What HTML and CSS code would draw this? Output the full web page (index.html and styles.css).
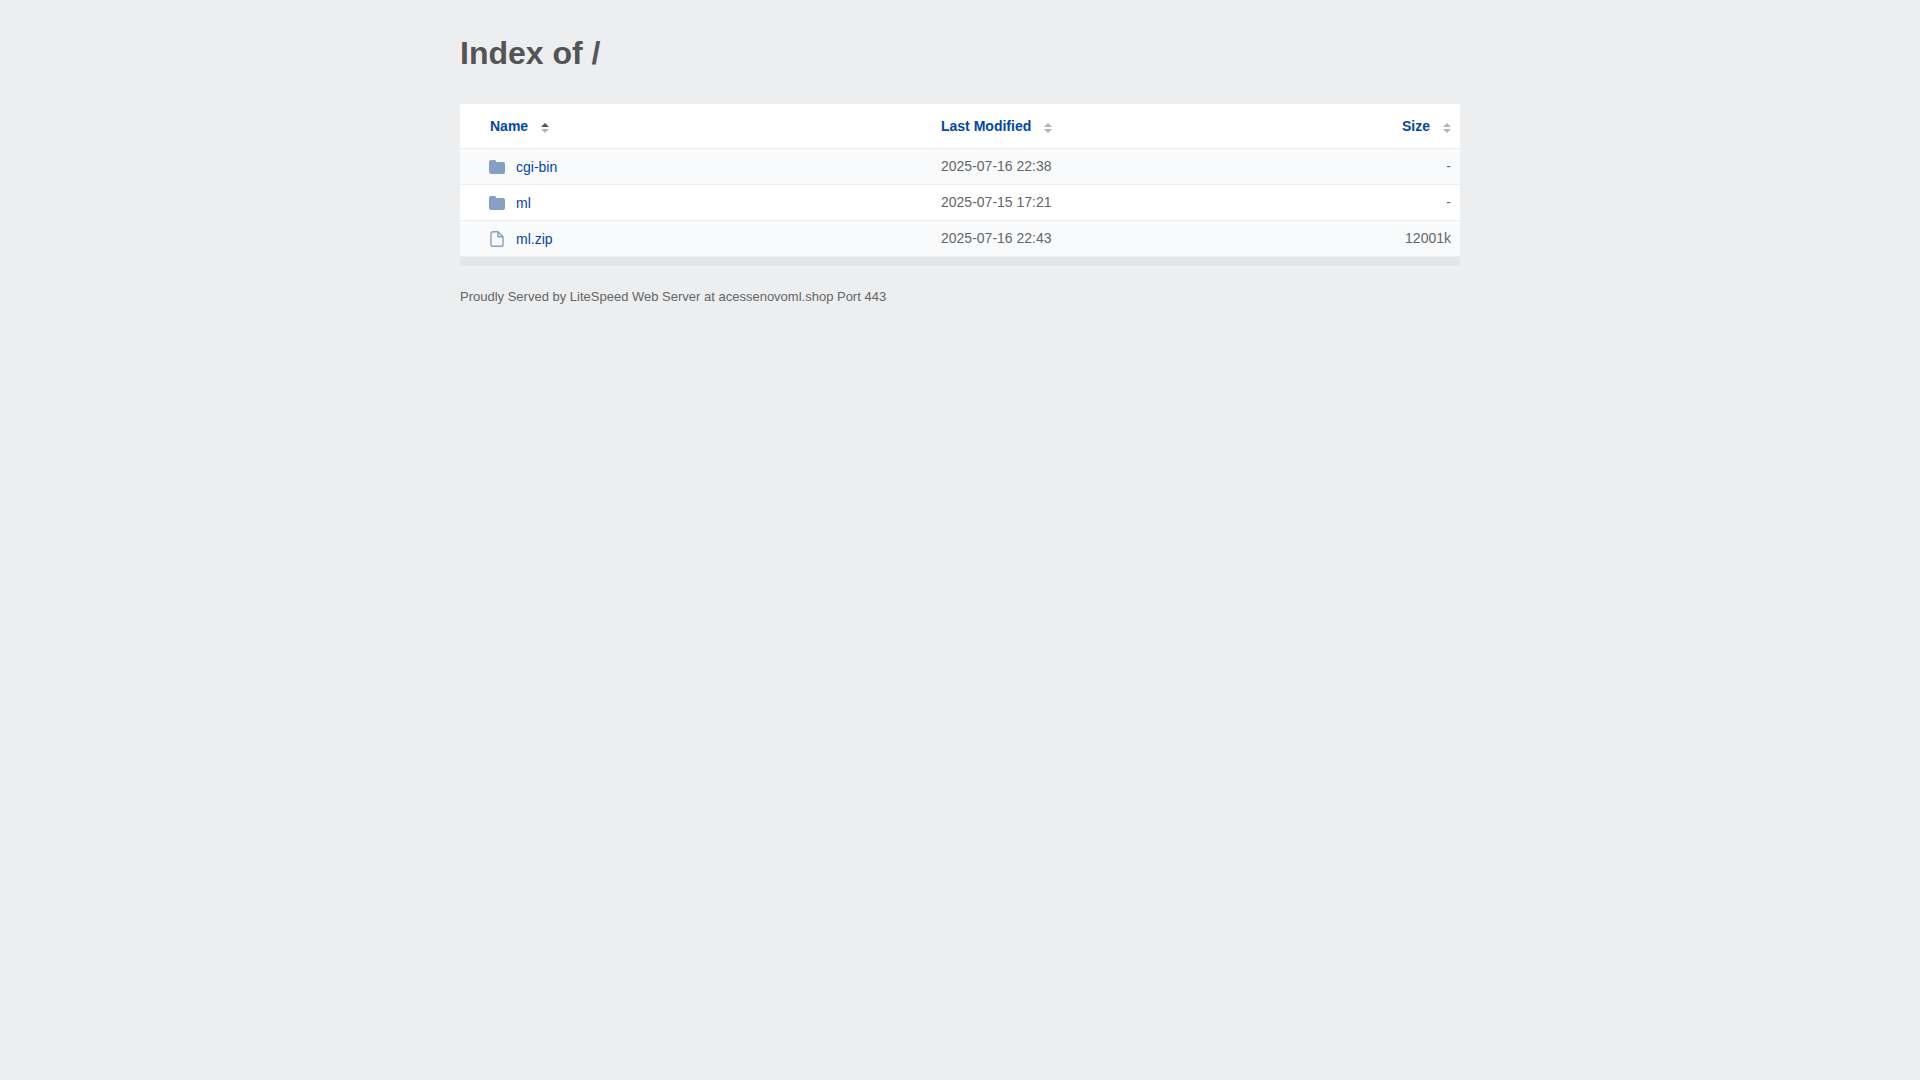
FILE: index.html
```
<!DOCTYPE html>
<html lang="en">
<head>
    <meta charset="UTF-8">
    <meta name="viewport" content="width=device-width, initial-scale=1.0">
    <title>Index of /</title>
    <link rel="stylesheet" href="styles.css">
</head>
<body>
    <svg class="sprite" aria-hidden="true">
        <symbol id="folder" viewBox="0 0 16 16">
            <path d="M0 3a2 2 0 0 1 2-2h3.500a1.500 1.500 0 0 1 1.500 1.200l.2.800H14a2 2 0 0 1 2 2v8a2 2 0 0 1-2 2H2a2 2 0 0 1-2-2z" fill="#85a0c6"/>
        </symbol>
        <symbol id="file" viewBox="0 0 16 16">
            <path d="M9 .8H3.800A1.800 1.800 0 0 0 2 2.600v10.800A1.800 1.800 0 0 0 3.800 15.200h8.400a1.800 1.800 0 0 0 1.800-1.800V5.800zM9 .8V5.800h5" fill="none" stroke="#85a0c6" stroke-width="1.400" stroke-linejoin="round"/>
        </symbol>
        <symbol id="sort" viewBox="0 0 8 10">
            <path d="M4 0l4 4H0z"/>
            <path d="M0 6h8l-4 4z"/>
        </symbol>
        <symbol id="sort-up" viewBox="0 0 8 10">
            <path d="M4 0l4 4H0z" fill="#555"/>
            <path d="M0 6h8l-4 4z"/>
        </symbol>
    </svg>

    <div class="container">
        <h1>Index of /</h1>
        <table class="listing">
            <thead>
                <tr>
                    <th class="name"><a href="#">Name<svg class="sort"><use href="#sort-up"/></svg></a></th>
                    <th class="modified"><a href="#">Last Modified<svg class="sort"><use href="#sort"/></svg></a></th>
                    <th class="size"><a href="#">Size<svg class="sort"><use href="#sort"/></svg></a></th>
                </tr>
            </thead>
            <tbody>
                <tr>
                    <td class="name"><a href="#"><svg class="icon"><use href="#folder"/></svg>cgi-bin</a></td>
                    <td>2025-07-16 22:38</td>
                    <td class="size">-</td>
                </tr>
                <tr>
                    <td class="name"><a href="#"><svg class="icon"><use href="#folder"/></svg>ml</a></td>
                    <td>2025-07-15 17:21</td>
                    <td class="size">-</td>
                </tr>
                <tr>
                    <td class="name"><a href="#"><svg class="icon"><use href="#file"/></svg>ml.zip</a></td>
                    <td>2025-07-16 22:43</td>
                    <td class="size">12001k</td>
                </tr>
            </tbody>
        </table>
        <footer>Proudly Served by LiteSpeed Web Server at acessenovoml.shop Port 443</footer>
    </div>
</body>
</html>
```
FILE: styles.css
```
body {
    margin: 0;
    padding: 0 20px;
    background-color: #edeef0;
    color: #656565;
    font-family: "Liberation Sans", Arial, sans-serif;
    font-size: 14px;
    line-height: 19px;
}
.sprite {
    display: none;
}
.container {
    max-width: 1000px;
    margin: 0 auto;
}
h1 {
    margin: 0;
    padding: 33px 0 31px;
    color: #545454;
    font-size: 32px;
    line-height: 40px;
}
a {
    color: #0047ab;
    text-decoration: none;
}
a:hover {
    text-decoration: underline;
}
.listing {
    width: 100%;
    table-layout: fixed;
    border-collapse: separate;
    border-spacing: 0;
    background-color: white;
    border-bottom: 9px solid #e3e6e9;
}
th,
td {
    padding: 8px 9px;
    text-align: left;
    border-bottom: 1px solid #ebedef;
}
th {
    padding: 13px 9px 12px;
}
tbody tr:nth-child(odd) {
    background-color: #f9fafc;
}
th.name {
    width: 433px;
    padding-left: 30px;
}
td.name {
    padding: 9px 9px 7px 28px;
}
td {
    vertical-align: top;
}
th.size {
    width: 120px;
}
.size {
    text-align: right;
}
.icon {
    width: 16px;
    height: 16px;
    margin: 0 11px 0 1px;
    vertical-align: -3px;
}
.sort {
    width: 8px;
    height: 10px;
    margin-left: 13px;
    vertical-align: -2px;
    fill: #b4b4b4;
}
footer {
    padding: 21px 0;
    font-size: 13px;
}
```
